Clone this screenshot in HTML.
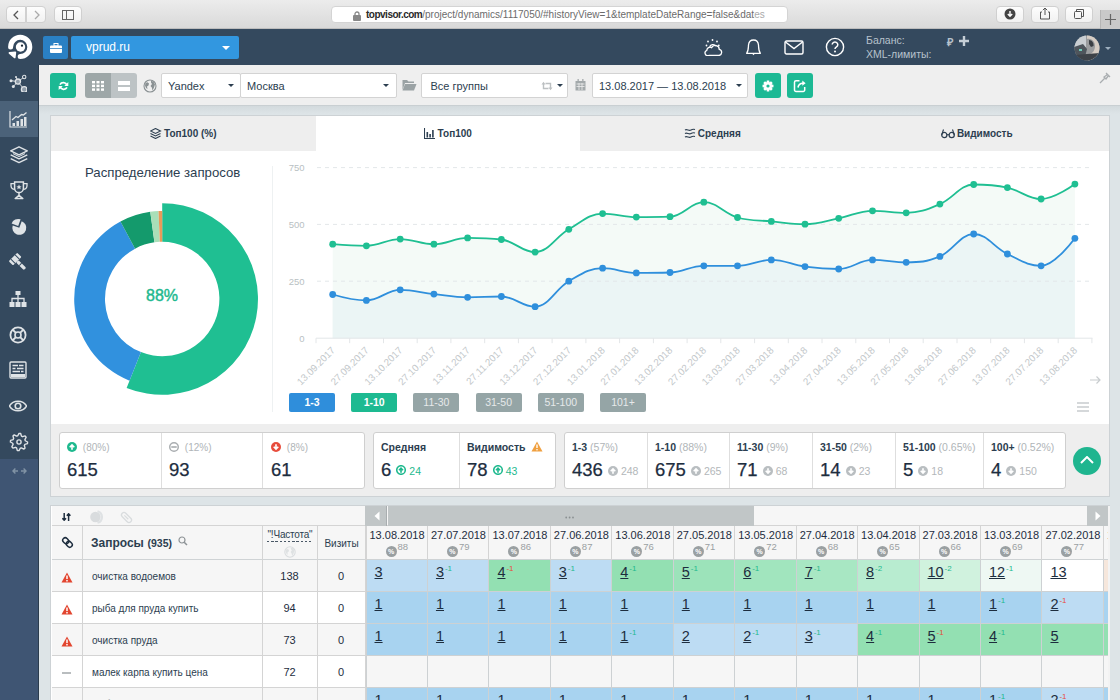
<!DOCTYPE html><html><head><meta charset="utf-8"><style>
*{box-sizing:border-box;margin:0;padding:0}
html,body{width:1120px;height:700px;overflow:hidden;background:#dde4e7;font-family:"Liberation Sans",sans-serif;color:#2c3e50}
.abs{position:absolute}
#chrome{position:absolute;left:0;top:0;width:1120px;height:29px;background:linear-gradient(#ececec,#d9d9d9);border-bottom:1px solid #bdbdbd}
.cbtn{position:absolute;top:6px;height:17px;background:linear-gradient(#fdfdfd,#f1f1f1);border:1px solid #d0d0d0;border-radius:4px}
#url{position:absolute;left:331px;top:6px;width:457px;height:17px;background:#fff;border:1px solid #d4d4d4;border-radius:4px;font-size:11px;line-height:15px;color:#555;white-space:nowrap;overflow:hidden}
#hdr{position:absolute;left:0;top:29px;width:1120px;height:36px;background:#34495e}
#side{position:absolute;left:0;top:65px;width:39px;height:635px;background:#34495e;border-right:1px solid #2b3c4d}
#tb{position:absolute;left:39px;top:65px;width:1081px;height:41px;background:#efefef;border-bottom:1px solid #c9cfd2}
#shadow{position:absolute;left:39px;top:106px;width:1081px;height:8px;background:linear-gradient(#d3dadd,#dde4e7)}
.gbtn{position:absolute;top:73px;width:26px;height:25px;background:#1cb994;border-radius:3px}
.sel{position:absolute;top:73px;height:25px;background:#fff;border:1px solid #d3d3d3;border-radius:2px;font-size:11px;line-height:24px;padding-left:6px;color:#2c3e50;white-space:nowrap}
.caret{position:absolute;top:10px;width:0;height:0;border-left:3px solid transparent;border-right:3px solid transparent;border-top:3px solid #2c3e50}
#p1{position:absolute;left:50px;top:115px;width:1060px;height:382px;background:#fff;border:1px solid #cdd2d5}
.tab{position:absolute;top:0;height:35px;background:#eeeeee;font-size:10px;font-weight:bold;line-height:36px;text-align:center;color:#2c3e50}
#stats{position:absolute;left:0;top:308px;width:1057px;height:73px;background:#eeeeee}
.sbox{position:absolute;top:8px;height:57px;background:#fff;border:1px solid #cfcfcf;border-radius:3px}
.cell{position:absolute;top:0;height:55px;border-left:1px solid #d6d6d6}
.cell:first-child{border-left:none}
.lab{position:absolute;left:9px;top:9px;font-size:11px;color:#b0b5b8;white-space:nowrap}
.lab b{color:#2c3e50}
.big{position:absolute;left:8px;top:26px;font-size:18.5px;color:#1d2d3e;white-space:nowrap}
.sm{font-size:12px;color:#a9adb0}
.leg{position:absolute;top:277px;width:46px;height:19px;border-radius:2px;color:#fff;font-size:10.5px;line-height:19px;text-align:center;background:#95a5a6}
#p2{position:absolute;left:50px;top:505px;width:1060px;height:200px;background:#fff;border:1px solid #cdd2d5}
.row{position:absolute;left:0;height:32px;width:1057px}
.c{position:absolute;top:0;height:100%;border-right:1px solid #d4d4d4;border-bottom:1px solid #d4d4d4}
.dc{position:absolute;top:0;height:100%;border-right:1px solid #cfd3d5;border-bottom:1px solid #cfd3d5}
.num{position:absolute;left:8px;top:6px;font-size:14px;color:#1d2d3e;text-decoration:underline;text-underline-offset:1px}
.num sup{font-size:8px;text-decoration:none;display:inline-block;vertical-align:top;margin-left:1px;margin-top:-2px}
.q{position:absolute;left:9px;top:9px;font-size:11.5px;color:#2c3e50;white-space:nowrap}
</style></head><body>
<div id="chrome">
<div class="cbtn" style="left:6px;width:20px;border-radius:4px 0 0 4px"></div>
<div class="cbtn" style="left:26px;width:20px;border-radius:0 4px 4px 0"></div>
<svg width="8" height="10" viewBox="0 0 8 10" style="position:absolute;left:12px;top:10px"><path d="M6 1 L2 5 L6 9" fill="none" stroke="#555" stroke-width="1.3"/></svg>
<svg width="8" height="10" viewBox="0 0 8 10" style="position:absolute;left:33px;top:10px"><path d="M2 1 L6 5 L2 9" fill="none" stroke="#aaa" stroke-width="1.3"/></svg>
<div class="cbtn" style="left:54px;width:28px"></div>
<svg width="12" height="10" viewBox="0 0 12 10" style="position:absolute;left:62px;top:10px"><rect x="0.5" y="0.5" width="11" height="9" fill="none" stroke="#666" stroke-width="1"/><line x1="4.5" y1="0.5" x2="4.5" y2="9.5" stroke="#666"/></svg>
<div id="url"><span style="position:absolute;left:21px;top:3px"><svg width="8" height="10" viewBox="0 0 8 10" style=""><rect x="0" y="4" width="8" height="6" rx="1" fill="#888"/><path d="M2 4.5 V3 a2 2 0 0 1 4 0 V4.5" fill="none" stroke="#888" stroke-width="1.3"/></svg></span><span style="position:absolute;left:34px;top:0;font-size:10px;color:#6b6b6b"><b style="color:#2a2a2a;font-weight:bold;letter-spacing:-0.5px">topvisor.com</b>/project/dynamics/1117050/#historyView=1&amp;templateDateRange=false&amp;dat<span style="color:#aaa">es</span></span></div>
<div class="cbtn" style="left:996px;width:28px"></div>
<div class="cbtn" style="left:1031px;width:28px"></div>
<div class="cbtn" style="left:1065px;width:28px"></div>
<svg width="12" height="12" viewBox="0 0 12 12" style="position:absolute;left:1004px;top:8px"><circle cx="6" cy="6" r="5.5" fill="#444"/><path d="M6 3 V8 M3.8 6 L6 8.3 L8.2 6" stroke="#fff" stroke-width="1.4" fill="none"/></svg>
<svg width="12" height="13" viewBox="0 0 12 13" style="position:absolute;left:1039px;top:7px"><path d="M3 5 H1.5 V12 H10.5 V5 H9" fill="none" stroke="#555" stroke-width="1"/><path d="M6 8 V1 M3.8 3.2 L6 1 L8.2 3.2" fill="none" stroke="#555" stroke-width="1"/></svg>
<svg width="12" height="12" viewBox="0 0 12 12" style="position:absolute;left:1073px;top:8px"><rect x="1.5" y="3.5" width="7" height="7" rx="1" fill="none" stroke="#555"/><path d="M3.5 3.5 V1.5 H10.5 V8.5 H8.5" fill="none" stroke="#555"/></svg>
<div style="position:absolute;left:1100px;top:10px;width:20px;height:19px;background:#c9c9c9;border-left:1px solid #b5b5b5"></div>
<svg width="11" height="11" viewBox="0 0 11 11" style="position:absolute;left:1105px;top:14px"><path d="M5.5 0 V11 M0 5.5 H11" stroke="#666" stroke-width="1.2"/></svg>
</div>
<div id="hdr">
<svg width="34" height="34" viewBox="0 0 34 34" style="position:absolute;left:4px;top:0px"><path d="M6.6 17.9 A9.6 9.6 0 1 1 16.2 27.5" fill="none" stroke="#fff" stroke-width="5" stroke-linecap="round"/><circle cx="16.5" cy="18" r="4.7" fill="#fff"/><circle cx="18" cy="16.7" r="1.15" fill="#1e2a36"/><path d="M5.6 23.9 L11.2 23.5 L10.6 28.3 Z" fill="#fff" stroke="#fff" stroke-width="2" stroke-linejoin="round"/></svg>
<div style="position:absolute;left:43px;top:7px;width:25px;height:23px;background:#2a80c4;border-radius:2px"></div>
<svg width="12" height="10" viewBox="0 0 12 10" style="position:absolute;left:50px;top:14px"><rect x="0" y="2.5" width="12" height="7.5" rx="1" fill="#fff"/><rect x="4" y="0.5" width="4" height="2.5" fill="none" stroke="#fff" stroke-width="1"/><line x1="0" y1="5.5" x2="12" y2="5.5" stroke="#2a80c4" stroke-width="0.8"/></svg>
<div style="position:absolute;left:71px;top:7px;width:168px;height:23px;background:#3297e0;border-radius:2px;color:#fff;font-size:12px;line-height:23px;padding-left:15px">vprud.ru</div>
<div class="caret" style="left:222px;top:17px;border-top-color:#fff;border-left-width:4px;border-right-width:4px;border-top-width:4px"></div>
<svg width="24" height="24" viewBox="0 0 24 24" style="position:absolute;left:701px;top:3px"><circle cx="11.5" cy="8" r="0.9" fill="#fff"/><circle cx="7" cy="9.5" r="0.9" fill="#fff"/><circle cx="16" cy="9.5" r="0.9" fill="#fff"/><circle cx="5.5" cy="13.5" r="0.9" fill="#fff"/><circle cx="17.8" cy="13.5" r="0.9" fill="#fff"/><path d="M8.6 15.5 A3.4 3.4 0 0 1 14.8 14.2" fill="none" stroke="#fff" stroke-width="1.3"/><path d="M7.8 23.5 H17.6 A3.1 3.1 0 0 0 18.3 17.4 A4.1 4.1 0 0 0 10.6 15.6 A3.2 3.2 0 0 0 5.8 18.4 A2.6 2.6 0 0 0 7.8 23.5 Z" fill="none" stroke="#fff" stroke-width="1.3"/></svg>
<svg width="20" height="24" viewBox="0 0 20 24" style="position:absolute;left:744px;top:3px"><path d="M2.6 21.3 C4.5 19 4.3 16 4.5 13 C4.8 9.6 6.8 8 9.5 8 C12.2 8 14.2 9.6 14.5 13 C14.7 16 14.5 19 16.4 21.3 Z" fill="none" stroke="#fff" stroke-width="1.3" stroke-linejoin="round"/><path d="M8 21.5 L9.5 23.3 L11 21.5" fill="#fff"/></svg>
<svg width="20" height="15" viewBox="0 0 20 15" style="position:absolute;left:784px;top:11px"><rect x="1" y="1" width="18" height="13" rx="1.5" fill="none" stroke="#fff" stroke-width="1.4"/><path d="M1.5 2 L10 8.5 L18.5 2" fill="none" stroke="#fff" stroke-width="1.4"/></svg>
<svg width="20" height="20" viewBox="0 0 20 20" style="position:absolute;left:825px;top:8px"><circle cx="10" cy="10" r="8.6" fill="none" stroke="#fff" stroke-width="1.4"/><path d="M7.2 7.6 a2.8 2.6 0 1 1 4.3 2.2 c-1 .6-1.5 1.1-1.5 2.3" fill="none" stroke="#fff" stroke-width="1.5"/><circle cx="10" cy="14.6" r="1" fill="#fff"/></svg>
<div style="position:absolute;left:866px;top:5px;font-size:10.5px;line-height:13.5px;color:#b7c2cc">Баланс:<br>XML-лимиты:</div>
<div style="position:absolute;left:947px;top:5px;font-size:11px;color:#b7c2cc;font-weight:bold">₽</div>
<svg width="10" height="10" viewBox="0 0 10 10" style="position:absolute;left:959px;top:7px"><path d="M5 0 V10 M0 5 H10" stroke="#c5ced6" stroke-width="2.4"/></svg>
<svg width="26" height="26" viewBox="0 0 26 26" style="position:absolute;left:1073.5px;top:5.5px"><defs><clipPath id="av"><circle cx="13" cy="13" r="12.5"/></clipPath></defs><g clip-path="url(#av)"><rect width="26" height="26" fill="#9a9c9e"/><rect x="0" y="0" width="12" height="12" fill="#c9ced2"/><path d="M0 12 L9 9 L13 14 L10 26 H0 Z" fill="#4e555c"/><path d="M13 4 C17 3 21 6 21 11 C21 15 19 18 16 19 L14 26 H26 V0 H13 Z" fill="#d6cdc4"/><path d="M15 5 C18 5 20 8 19.5 11 L17 12 L15 9 Z" fill="#3b3f44"/><path d="M0 20 L26 18 V26 H0 Z" fill="#3d4248"/><rect x="5" y="14" width="3" height="2" fill="#6fc9b8"/></g></svg>
<div class="caret" style="left:1105px;top:18px;border-top-color:#9fb0bf;border-left-width:3px;border-right-width:3px;border-top-width:3px"></div>
</div>
<div id="side">
<div style="position:absolute;left:0;top:36px;width:38px;height:36px;background:#4b6279"></div>
<div style="position:absolute;left:0;top:394px;width:38px;height:241px;background:#3f5573"></div>
<svg width="18" height="18" viewBox="0 0 18 18" style="position:absolute;left:9px;top:9px"><path d="M8.9 7.6 L15.2 3 M8.9 7.6 L15.2 15.5 M8.9 7.6 L2 6.7 M8.9 7.6 L4.3 12.5 M8.9 7.6 L7 3" stroke="#dfe3e6" stroke-width="0.9"/><circle cx="8.9" cy="7.6" r="2.6" fill="#8d9aa7" stroke="#dfe3e6" stroke-width="1.3"/><circle cx="15.2" cy="3" r="1.7" fill="#34495e" stroke="#dfe3e6" stroke-width="1.1"/><circle cx="15.2" cy="15.5" r="2.8" fill="#8d9aa7" stroke="#dfe3e6" stroke-width="1.3"/><circle cx="2" cy="6.7" r="1.5" fill="#dfe3e6"/><circle cx="4.3" cy="12.5" r="1.5" fill="#dfe3e6"/><circle cx="7" cy="3" r="1" fill="#dfe3e6"/></svg>
<svg width="18" height="18" viewBox="0 0 18 18" style="position:absolute;left:9px;top:45px"><path d="M1 1 V17 H18" fill="none" stroke="#dfe3e6" stroke-width="1.2"/><rect x="3.5" y="13" width="2.5" height="3" fill="#dfe3e6"/><rect x="7.5" y="11" width="2.5" height="5" fill="#dfe3e6"/><rect x="11.5" y="9" width="2.5" height="7" fill="#dfe3e6"/><rect x="15" y="7" width="2.5" height="9" fill="#dfe3e6"/><path d="M3 10 L7 6.5 L9 7.5 L12.5 4.5 L14.5 5 L17.5 2.5" fill="none" stroke="#dfe3e6" stroke-width="1.3"/></svg>
<svg width="20" height="20" viewBox="0 0 20 20" style="position:absolute;left:8.5px;top:80px"><path d="M10 1.8 L18.3 5.8 L10 9.8 L1.7 5.8 Z" fill="none" stroke="#dfe3e6" stroke-width="1.4" stroke-linejoin="round"/><path d="M1.7 9.8 L10 13.8 L18.3 9.8" fill="none" stroke="#dfe3e6" stroke-width="1.4" stroke-linejoin="round"/><path d="M1.7 13.6 L10 17.6 L18.3 13.6" fill="none" stroke="#dfe3e6" stroke-width="1.4" stroke-linejoin="round"/><path d="M4 8.6 L10 11.6 L16 8.6" fill="none" stroke="#dfe3e6" stroke-width="1"/></svg>
<svg width="20" height="20" viewBox="0 0 20 20" style="position:absolute;left:8.5px;top:115px"><path d="M5.6 2 H14.4 V8.2 a4.4 4.4 0 0 1 -8.8 0 Z" fill="none" stroke="#dfe3e6" stroke-width="1.5"/><path d="M5.6 3.6 H2 V5.8 a3.6 3.6 0 0 0 3.8 3.6 M14.4 3.6 H18 V5.8 a3.6 3.6 0 0 1 -3.8 3.6" fill="none" stroke="#dfe3e6" stroke-width="1.3"/><path d="M10 12.6 V15.2 M6.2 18.6 L10 15.2 L13.8 18.6 Z" fill="none" stroke="#dfe3e6" stroke-width="1.5" stroke-linejoin="round"/><path d="M10 4.6 L10.8 6.3 L12.6 6.4 L11.2 7.5 L11.7 9.2 L10 8.3 L8.3 9.2 L8.8 7.5 L7.4 6.4 L9.2 6.3 Z" fill="#dfe3e6"/></svg>
<svg width="20" height="20" viewBox="0 0 20 20" style="position:absolute;left:8.5px;top:152px"><path d="M10.3 10.8 L12.69 4.22 A7 7 0 1 1 3.72 8.41 Z" fill="#dfe3e6"/><path d="M9.2 8.9 L2.62 6.51 A7 7 0 0 1 11.59 2.32 Z" fill="#dfe3e6"/></svg>
<svg width="20" height="20" viewBox="0 0 20 20" style="position:absolute;left:8.5px;top:188px"><g transform="rotate(-45 10 10)"><rect x="4" y="1.5" width="12" height="6" rx="1" fill="#dfe3e6"/><rect x="8.3" y="7.5" width="3.4" height="11" rx="1.2" fill="#dfe3e6"/><path d="M7 1.5 V7.5 M13 1.5 V7.5 M8.3 12 H11.7" stroke="#34495e" stroke-width="1"/></g></svg>
<svg width="18" height="18" viewBox="0 0 18 18" style="position:absolute;left:9px;top:225px"><rect x="6.5" y="1" width="5" height="4" fill="#dfe3e6"/><rect x="0.5" y="12" width="5" height="5" fill="#dfe3e6"/><rect x="6.5" y="12" width="5" height="5" fill="#dfe3e6"/><rect x="12.5" y="12" width="5" height="5" fill="#dfe3e6"/><path d="M9 5 V12 M3 12 V8.5 H15 V12" fill="none" stroke="#dfe3e6" stroke-width="1.3"/></svg>
<svg width="18" height="18" viewBox="0 0 18 18" style="position:absolute;left:9px;top:261px"><circle cx="9" cy="9" r="7.6" fill="none" stroke="#dfe3e6" stroke-width="1.8"/><circle cx="9" cy="9" r="3" fill="none" stroke="#dfe3e6" stroke-width="1.6"/><path d="M3.6 3.6 L6.9 6.9 M14.4 3.6 L11.1 6.9 M3.6 14.4 L6.9 11.1 M14.4 14.4 L11.1 11.1" stroke="#dfe3e6" stroke-width="2"/></svg>
<svg width="18" height="18" viewBox="0 0 18 18" style="position:absolute;left:9px;top:296px"><rect x="1" y="1" width="16" height="16" rx="1" fill="none" stroke="#dfe3e6" stroke-width="1.4"/><path d="M3.5 4.5 H9 M10 4.5 H14.5 M3.5 7.5 H6.5 M8 7.5 H14.5 M3.5 10.5 H11 M12 10.5 H14.5" stroke="#dfe3e6" stroke-width="1.3"/><rect x="2" y="13" width="14" height="3" fill="#dfe3e6"/></svg>
<svg width="18" height="18" viewBox="0 0 18 18" style="position:absolute;left:9px;top:332px"><path d="M0.5 9 C4 2.8 14 2.8 17.5 9 C14 15.2 4 15.2 0.5 9 Z" fill="none" stroke="#dfe3e6" stroke-width="1.5"/><circle cx="9" cy="9" r="2.8" fill="none" stroke="#dfe3e6" stroke-width="1.6"/></svg>
<svg width="20" height="20" viewBox="0 0 20 20" style="position:absolute;left:8.5px;top:366.5px"><polygon points="10.00,1.40 11.68,1.57 12.45,4.09 13.56,4.68 16.08,3.92 17.15,5.22 15.91,7.55 16.28,8.75 18.60,10.00 18.43,11.68 15.91,12.45 15.32,13.56 16.08,16.08 14.78,17.15 12.45,15.91 11.25,16.28 10.00,18.60 8.32,18.43 7.55,15.91 6.44,15.32 3.92,16.08 2.85,14.78 4.09,12.45 3.72,11.25 1.40,10.00 1.57,8.32 4.09,7.55 4.68,6.44 3.92,3.92 5.22,2.85 7.55,4.09 8.75,3.72" fill="none" stroke="#dfe3e6" stroke-width="1.4" stroke-linejoin="round"/><circle cx="10" cy="10" r="2.1" fill="none" stroke="#dfe3e6" stroke-width="1.4"/></svg>
<svg width="15" height="8" viewBox="0 0 15 8" style="position:absolute;left:11.5px;top:401.5px"><path d="M1 4 H6 M3.4 1.6 L1 4 L3.4 6.4 M9 4 H14 M11.6 1.6 L14 4 L11.6 6.4" fill="none" stroke="#8193a5" stroke-width="1.4"/></svg>
</div>
<div id="tb"></div><div id="shadow"></div>
<div class="gbtn" style="left:50px"></div>
<svg width="11" height="10" viewBox="0 0 11 10" style="position:absolute;left:58px;top:81px"><path d="M9 4.2 A3.9 3.9 0 0 0 2 3.6 M2 5.8 A3.9 3.9 0 0 0 9 6.4" fill="none" stroke="#fff" stroke-width="1.8"/><path d="M10.3 1 V5 H6.3 Z M0.7 9 V5 H4.7 Z" fill="#fff"/></svg>
<div style="position:absolute;left:85px;top:73px;width:26px;height:25px;background:#9ea7a8;border-radius:3px 0 0 3px"></div>
<div style="position:absolute;left:111px;top:73px;width:26px;height:25px;background:#bdc3c5;border-radius:0 3px 3px 0"></div>
<svg width="12" height="10" viewBox="0 0 12 10" style="position:absolute;left:92px;top:81px"><rect x="0" y="0" width="3" height="2.4" fill="#fff"/><rect x="0" y="3.7" width="3" height="2.4" fill="#fff"/><rect x="0" y="7.4" width="3" height="2.4" fill="#fff"/><rect x="4.5" y="0" width="3" height="2.4" fill="#fff"/><rect x="4.5" y="3.7" width="3" height="2.4" fill="#fff"/><rect x="4.5" y="7.4" width="3" height="2.4" fill="#fff"/><rect x="9" y="0" width="3" height="2.4" fill="#fff"/><rect x="9" y="3.7" width="3" height="2.4" fill="#fff"/><rect x="9" y="7.4" width="3" height="2.4" fill="#fff"/></svg>
<svg width="12" height="10" viewBox="0 0 12 10" style="position:absolute;left:118px;top:81px"><rect x="0" y="0" width="12" height="4" fill="#fff"/><rect x="0" y="6" width="12" height="4" fill="#fff"/></svg>
<svg width="14" height="14" viewBox="0 0 14 14" style="position:absolute;left:143px;top:78.5px"><circle cx="7" cy="7" r="6" fill="none" stroke="#8a9193" stroke-width="1.1"/><path d="M2.5 4 L4.5 3.2 L6 4.5 L5.5 6.5 L4 7.5 L4.5 10 L3 9 L2 6.5 Z M8 1.8 L10.5 2.8 L12 5.5 L11 8.5 L9.5 11.5 L8.8 8.5 L7.5 7 L9 5 L8 3.5 Z" fill="#8a9193"/></svg>
<div class="sel" style="left:161px;width:80px">Yandex<div class="caret" style="left:65.5px"></div></div>
<div class="sel" style="left:240px;width:157px">Москва<div class="caret" style="left:142px"></div></div>
<svg width="15" height="12" viewBox="0 0 15 12" style="position:absolute;left:402px;top:79px"><path d="M0.5 1 H5 L6.5 2.5 H12 V4 H3 L0.5 11 Z" fill="#9aa2a4"/><path d="M3 5 H14.5 L12 11.5 H0.5 Z" fill="#9aa2a4"/></svg>
<div class="sel" style="left:421px;width:147px;padding-left:8.5px">Все группы<div class="caret" style="left:134.5px"></div></div>
<svg width="12" height="10" viewBox="0 0 12 10" style="position:absolute;left:541px;top:81px"><path d="M2.5 3 V7.5 H7.5 M9.5 7 V2.5 H4.5" fill="none" stroke="#bcc0c2" stroke-width="1.4"/><path d="M0.5 3.5 L2.5 0.8 L4.5 3.5 Z M7.5 6.5 L9.5 9.2 L11.5 6.5 Z" fill="#bcc0c2"/></svg>
<svg width="11" height="12" viewBox="0 0 11 12" style="position:absolute;left:575px;top:79px"><rect x="0.5" y="2" width="10" height="9.5" fill="#a3a9ab"/><path d="M1.5 5 H9.5 M1.5 7.5 H9.5 M4 4 V11 M7 4 V11" stroke="#efefef" stroke-width="0.8"/><rect x="2.5" y="0" width="1.3" height="3" fill="#a3a9ab"/><rect x="7.2" y="0" width="1.3" height="3" fill="#a3a9ab"/></svg>
<div class="sel" style="left:592px;width:156px">13.08.2017 — 13.08.2018<div class="caret" style="left:143px"></div></div>
<div class="gbtn" style="left:755px"></div>
<svg width="14" height="14" viewBox="0 0 14 14" style="position:absolute;left:760.6px;top:79.25px"><polygon points="5.56,3.16 5.78,1.53 8.22,1.53 8.44,3.16 8.69,3.27 10.00,2.27 11.73,4.00 10.73,5.31 10.84,5.56 12.47,5.78 12.47,8.22 10.84,8.44 10.73,8.69 11.73,10.00 10.00,11.73 8.69,10.73 8.44,10.84 8.22,12.47 5.78,12.47 5.56,10.84 5.31,10.73 4.00,11.73 2.27,10.00 3.27,8.69 3.16,8.44 1.53,8.22 1.53,5.78 3.16,5.56 3.27,5.31 2.27,4.00 4.00,2.27 5.31,3.27" fill="#fff"/><circle cx="7" cy="7" r="1.6" fill="#1cb994"/></svg>
<div class="gbtn" style="left:787px"></div>
<svg width="14" height="14" viewBox="0 0 14 14" style="position:absolute;left:793px;top:79px"><path d="M6.5 1.8 H3 a1.5 1.5 0 0 0 -1.5 1.5 V11 a1.5 1.5 0 0 0 1.5 1.5 H10.2 a1.5 1.5 0 0 0 1.5 -1.5 V8" fill="none" stroke="#fff" stroke-width="1.5"/><path d="M5 8.5 C5.5 5.5 7.5 4.2 10 4.2" fill="none" stroke="#fff" stroke-width="1.6"/><path d="M9.3 1.6 L12.6 4.2 L9.3 6.8 Z" fill="#fff"/></svg>
<svg width="12" height="12" viewBox="0 0 12 12" style="position:absolute;left:1099px;top:72px"><path d="M7 1 L11 5 M8.5 2.5 L5 5 L7 7 L9.5 3.5 M5.5 6.5 L1 11" fill="none" stroke="#a9adb0" stroke-width="1.3"/></svg>
<div id="p1">
<div class="tab" style="left:0.00px;width:264.50px;background:#eeeeee"><span style="display:inline-block;vertical-align:middle;margin-right:2px;position:relative;top:1.5px"><svg width="12" height="11" viewBox="0 0 12 11" style=""><path d="M5.5 0.5 L10.5 3 L5.5 5.5 L0.5 3 Z" fill="none" stroke="#2c3e50" stroke-width="1.1"/><path d="M0.5 5.5 L5.5 8 L10.5 5.5 M0.5 8 L5.5 10.5 L10.5 8" fill="none" stroke="#2c3e50" stroke-width="1.1"/></svg></span>Топ100 (%)</div>
<div class="tab" style="left:264.50px;width:264.50px;background:#fff"><span style="display:inline-block;vertical-align:middle;margin-right:2px;position:relative;top:1.5px"><svg width="12" height="11" viewBox="0 0 12 11" style=""><path d="M0.5 0 V10.5 H11" fill="none" stroke="#2c3e50" stroke-width="1.1"/><rect x="2.5" y="4" width="1.6" height="5.5" fill="#2c3e50"/><rect x="5.3" y="6" width="1.6" height="3.5" fill="#2c3e50"/><rect x="8.1" y="2" width="1.6" height="7.5" fill="#2c3e50"/></svg></span>Топ100</div>
<div class="tab" style="left:529.00px;width:264.50px;background:#eeeeee"><span style="display:inline-block;vertical-align:middle;margin-right:2px;position:relative;top:1.5px"><svg width="12" height="11" viewBox="0 0 12 11" style=""><path d="M1 2 C3 0.5 5 3.5 7 2 C8.5 1 9.5 1 11 1.5 M1 5.5 C3 4 5 7 7 5.5 C8.5 4.5 9.5 4.5 11 5 M1 9 C3 7.5 5 10.5 7 9 C8.5 8 9.5 8 11 8.5" fill="none" stroke="#2c3e50" stroke-width="1.1"/></svg></span>Средняя</div>
<div class="tab" style="left:793.50px;width:264.50px;background:#eeeeee"><span style="display:inline-block;vertical-align:middle;margin-right:2px;position:relative;top:1.5px"><svg width="14" height="11" viewBox="0 0 14 11" style=""><circle cx="3.3" cy="7" r="2.6" fill="none" stroke="#2c3e50" stroke-width="1.2"/><circle cx="10.7" cy="7" r="2.6" fill="none" stroke="#2c3e50" stroke-width="1.2"/><path d="M5.9 7 Q7 6 8.1 7 M0.7 7 L2.5 1.5 M13.3 7 L11.5 1.5" fill="none" stroke="#2c3e50" stroke-width="1.1"/></svg></span>Видимость</div>
<div style="position:absolute;left:34px;top:49px;font-size:13.2px;color:#2c3e50;white-space:nowrap">Распределение запросов</div>
<div style="position:absolute;left:221px;top:50px;width:1px;height:246px;background:#eef1f2"></div>
</div>
<svg width="1120" height="700" viewBox="0 0 1120 700" style="position:absolute;left:0;top:0"><path d="M162.20 203.20 A95.8 95.8 0 1 1 126.62 387.95 L140.96 352.11 A57.2 57.2 0 1 0 162.20 241.80 Z" fill="#1fbf92"/><path d="M129.52 380.71 A88 88 0 0 1 120.48 221.52 L135.08 248.64 A57.2 57.2 0 0 0 140.96 352.11 Z" fill="#3191de"/><path d="M120.48 221.52 A88 88 0 0 1 150.26 211.81 L154.44 242.33 A57.2 57.2 0 0 0 135.08 248.64 Z" fill="#149a6c"/><path d="M150.26 211.81 A88 88 0 0 1 158.51 211.08 L159.80 241.85 A57.2 57.2 0 0 0 154.44 242.33 Z" fill="#a9dfb8"/><path d="M158.51 211.08 A88 88 0 0 1 162.18 211.00 L162.19 241.80 A57.2 57.2 0 0 0 159.80 241.85 Z" fill="#e89a5a"/></svg>
<div style="position:absolute;left:145px;top:286.5px;width:34px;text-align:center;font-size:16px;color:#1eb98e;-webkit-text-stroke:0.45px #1eb98e">88%</div>
<svg width="1120" height="700" viewBox="0 0 1120 700" style="position:absolute;left:0;top:0"><path d="M332.7 244.2 C332.7 244.2 352.9 245.8 366.4 245.8 C379.9 245.8 386.7 239.1 400.2 239.1 C413.7 239.1 420.4 244.2 433.9 244.2 C447.4 244.2 454.1 237.9 467.6 237.9 C481.1 237.9 487.9 237.9 501.4 239.5 C514.9 241.1 521.6 252.1 535.1 252.1 C548.6 252.1 555.4 237.0 568.8 229.3 C582.3 221.6 589.1 213.6 602.6 213.6 C616.1 213.6 622.8 217.1 636.3 217.1 C649.8 217.1 656.6 217.1 670.0 216.7 C683.5 216.3 690.3 202.2 703.8 202.2 C717.3 202.2 724.0 213.7 737.5 217.5 C751.0 221.3 757.8 220.1 771.3 221.4 C784.7 222.7 791.5 224.2 805.0 224.2 C818.5 224.2 825.2 221.0 838.7 218.3 C852.2 215.6 859.0 210.8 872.5 210.8 C886.0 210.8 892.7 212.8 906.2 212.8 C919.7 212.8 926.4 209.8 939.9 204.1 C953.4 198.4 960.2 184.5 973.7 184.5 C987.2 184.5 993.9 184.7 1007.4 187.6 C1020.9 190.5 1027.6 199.0 1041.1 199.0 C1054.6 199.0 1074.9 184.1 1074.9 184.1 L1074.9 338.2 L332.7 338.2 Z" fill="#f4faf7"/><path d="M332.7 294.5 C332.7 294.5 352.9 300.4 366.4 300.4 C379.9 300.4 386.7 289.8 400.2 289.8 C413.7 289.8 420.4 292.6 433.9 294.1 C447.4 295.6 454.1 297.3 467.6 297.3 C481.1 297.3 487.9 296.5 501.4 296.5 C514.9 296.5 521.6 306.7 535.1 306.7 C548.6 306.7 555.4 288.9 568.8 281.2 C582.3 273.5 589.1 268.2 602.6 268.2 C616.1 268.2 622.8 272.9 636.3 272.9 C649.8 272.9 656.6 272.9 670.0 272.5 C683.5 272.1 690.3 265.8 703.8 265.8 C717.3 265.8 724.0 265.8 737.5 265.8 C751.0 265.8 757.8 259.9 771.3 259.9 C784.7 259.9 791.5 264.8 805.0 266.6 C818.5 268.4 825.2 269.0 838.7 269.0 C852.2 269.0 859.0 259.9 872.5 259.9 C886.0 259.9 892.7 262.3 906.2 262.3 C919.7 262.3 926.4 262.1 939.9 256.4 C953.4 250.7 960.2 234.0 973.7 234.0 C987.2 234.0 993.9 247.6 1007.4 254.0 C1020.9 260.4 1027.6 265.8 1041.1 265.8 C1054.6 265.8 1074.9 238.3 1074.9 238.3 L1074.9 338.2 L332.7 338.2 Z" fill="#ebf5f5"/><line x1="317" y1="167.6" x2="1092" y2="167.6" stroke="#e3e7e9" stroke-width="1" stroke-dasharray="4,4"/><line x1="317" y1="224.4" x2="1092" y2="224.4" stroke="#e3e7e9" stroke-width="1" stroke-dasharray="4,4"/><line x1="317" y1="281.2" x2="1092" y2="281.2" stroke="#e3e7e9" stroke-width="1" stroke-dasharray="4,4"/><text x="304.5" y="171.1" text-anchor="end" font-size="9.5" fill="#b9bfc3" font-family="Liberation Sans">750</text><text x="304.5" y="227.9" text-anchor="end" font-size="9.5" fill="#b9bfc3" font-family="Liberation Sans">500</text><text x="304.5" y="284.7" text-anchor="end" font-size="9.5" fill="#b9bfc3" font-family="Liberation Sans">250</text><text x="304.5" y="341.7" text-anchor="end" font-size="9.5" fill="#b9bfc3" font-family="Liberation Sans">0</text><line x1="316" y1="338.2" x2="1092.5" y2="338.2" stroke="#e3e6e8" stroke-width="1"/><line x1="316.0" y1="338.2" x2="316.0" y2="343.2" stroke="#e3e6e8"/><line x1="349.7" y1="338.2" x2="349.7" y2="343.2" stroke="#e3e6e8"/><line x1="383.5" y1="338.2" x2="383.5" y2="343.2" stroke="#e3e6e8"/><line x1="417.2" y1="338.2" x2="417.2" y2="343.2" stroke="#e3e6e8"/><line x1="450.9" y1="338.2" x2="450.9" y2="343.2" stroke="#e3e6e8"/><line x1="484.7" y1="338.2" x2="484.7" y2="343.2" stroke="#e3e6e8"/><line x1="518.4" y1="338.2" x2="518.4" y2="343.2" stroke="#e3e6e8"/><line x1="552.1" y1="338.2" x2="552.1" y2="343.2" stroke="#e3e6e8"/><line x1="585.9" y1="338.2" x2="585.9" y2="343.2" stroke="#e3e6e8"/><line x1="619.6" y1="338.2" x2="619.6" y2="343.2" stroke="#e3e6e8"/><line x1="653.4" y1="338.2" x2="653.4" y2="343.2" stroke="#e3e6e8"/><line x1="687.1" y1="338.2" x2="687.1" y2="343.2" stroke="#e3e6e8"/><line x1="720.8" y1="338.2" x2="720.8" y2="343.2" stroke="#e3e6e8"/><line x1="754.6" y1="338.2" x2="754.6" y2="343.2" stroke="#e3e6e8"/><line x1="788.3" y1="338.2" x2="788.3" y2="343.2" stroke="#e3e6e8"/><line x1="822.0" y1="338.2" x2="822.0" y2="343.2" stroke="#e3e6e8"/><line x1="855.8" y1="338.2" x2="855.8" y2="343.2" stroke="#e3e6e8"/><line x1="889.5" y1="338.2" x2="889.5" y2="343.2" stroke="#e3e6e8"/><line x1="923.2" y1="338.2" x2="923.2" y2="343.2" stroke="#e3e6e8"/><line x1="957.0" y1="338.2" x2="957.0" y2="343.2" stroke="#e3e6e8"/><line x1="990.7" y1="338.2" x2="990.7" y2="343.2" stroke="#e3e6e8"/><line x1="1024.4" y1="338.2" x2="1024.4" y2="343.2" stroke="#e3e6e8"/><line x1="1058.2" y1="338.2" x2="1058.2" y2="343.2" stroke="#e3e6e8"/><line x1="1091.9" y1="338.2" x2="1091.9" y2="343.2" stroke="#e3e6e8"/><path d="M332.7 244.2 C332.7 244.2 352.9 245.8 366.4 245.8 C379.9 245.8 386.7 239.1 400.2 239.1 C413.7 239.1 420.4 244.2 433.9 244.2 C447.4 244.2 454.1 237.9 467.6 237.9 C481.1 237.9 487.9 237.9 501.4 239.5 C514.9 241.1 521.6 252.1 535.1 252.1 C548.6 252.1 555.4 237.0 568.8 229.3 C582.3 221.6 589.1 213.6 602.6 213.6 C616.1 213.6 622.8 217.1 636.3 217.1 C649.8 217.1 656.6 217.1 670.0 216.7 C683.5 216.3 690.3 202.2 703.8 202.2 C717.3 202.2 724.0 213.7 737.5 217.5 C751.0 221.3 757.8 220.1 771.3 221.4 C784.7 222.7 791.5 224.2 805.0 224.2 C818.5 224.2 825.2 221.0 838.7 218.3 C852.2 215.6 859.0 210.8 872.5 210.8 C886.0 210.8 892.7 212.8 906.2 212.8 C919.7 212.8 926.4 209.8 939.9 204.1 C953.4 198.4 960.2 184.5 973.7 184.5 C987.2 184.5 993.9 184.7 1007.4 187.6 C1020.9 190.5 1027.6 199.0 1041.1 199.0 C1054.6 199.0 1074.9 184.1 1074.9 184.1" fill="none" stroke="#1fbf92" stroke-width="1.8"/><path d="M332.7 294.5 C332.7 294.5 352.9 300.4 366.4 300.4 C379.9 300.4 386.7 289.8 400.2 289.8 C413.7 289.8 420.4 292.6 433.9 294.1 C447.4 295.6 454.1 297.3 467.6 297.3 C481.1 297.3 487.9 296.5 501.4 296.5 C514.9 296.5 521.6 306.7 535.1 306.7 C548.6 306.7 555.4 288.9 568.8 281.2 C582.3 273.5 589.1 268.2 602.6 268.2 C616.1 268.2 622.8 272.9 636.3 272.9 C649.8 272.9 656.6 272.9 670.0 272.5 C683.5 272.1 690.3 265.8 703.8 265.8 C717.3 265.8 724.0 265.8 737.5 265.8 C751.0 265.8 757.8 259.9 771.3 259.9 C784.7 259.9 791.5 264.8 805.0 266.6 C818.5 268.4 825.2 269.0 838.7 269.0 C852.2 269.0 859.0 259.9 872.5 259.9 C886.0 259.9 892.7 262.3 906.2 262.3 C919.7 262.3 926.4 262.1 939.9 256.4 C953.4 250.7 960.2 234.0 973.7 234.0 C987.2 234.0 993.9 247.6 1007.4 254.0 C1020.9 260.4 1027.6 265.8 1041.1 265.8 C1054.6 265.8 1074.9 238.3 1074.9 238.3" fill="none" stroke="#2f8fdc" stroke-width="1.8"/><circle cx="332.7" cy="244.2" r="3.4" fill="#1fbf92"/><circle cx="366.4" cy="245.8" r="3.4" fill="#1fbf92"/><circle cx="400.2" cy="239.1" r="3.4" fill="#1fbf92"/><circle cx="433.9" cy="244.2" r="3.4" fill="#1fbf92"/><circle cx="467.6" cy="237.9" r="3.4" fill="#1fbf92"/><circle cx="501.4" cy="239.5" r="3.4" fill="#1fbf92"/><circle cx="535.1" cy="252.1" r="3.4" fill="#1fbf92"/><circle cx="568.8" cy="229.3" r="3.4" fill="#1fbf92"/><circle cx="602.6" cy="213.6" r="3.4" fill="#1fbf92"/><circle cx="636.3" cy="217.1" r="3.4" fill="#1fbf92"/><circle cx="670.0" cy="216.7" r="3.4" fill="#1fbf92"/><circle cx="703.8" cy="202.2" r="3.4" fill="#1fbf92"/><circle cx="737.5" cy="217.5" r="3.4" fill="#1fbf92"/><circle cx="771.3" cy="221.4" r="3.4" fill="#1fbf92"/><circle cx="805.0" cy="224.2" r="3.4" fill="#1fbf92"/><circle cx="838.7" cy="218.3" r="3.4" fill="#1fbf92"/><circle cx="872.5" cy="210.8" r="3.4" fill="#1fbf92"/><circle cx="906.2" cy="212.8" r="3.4" fill="#1fbf92"/><circle cx="939.9" cy="204.1" r="3.4" fill="#1fbf92"/><circle cx="973.7" cy="184.5" r="3.4" fill="#1fbf92"/><circle cx="1007.4" cy="187.6" r="3.4" fill="#1fbf92"/><circle cx="1041.1" cy="199.0" r="3.4" fill="#1fbf92"/><circle cx="1074.9" cy="184.1" r="3.4" fill="#1fbf92"/><circle cx="332.7" cy="294.5" r="3.4" fill="#2f8fdc"/><circle cx="366.4" cy="300.4" r="3.4" fill="#2f8fdc"/><circle cx="400.2" cy="289.8" r="3.4" fill="#2f8fdc"/><circle cx="433.9" cy="294.1" r="3.4" fill="#2f8fdc"/><circle cx="467.6" cy="297.3" r="3.4" fill="#2f8fdc"/><circle cx="501.4" cy="296.5" r="3.4" fill="#2f8fdc"/><circle cx="535.1" cy="306.7" r="3.4" fill="#2f8fdc"/><circle cx="568.8" cy="281.2" r="3.4" fill="#2f8fdc"/><circle cx="602.6" cy="268.2" r="3.4" fill="#2f8fdc"/><circle cx="636.3" cy="272.9" r="3.4" fill="#2f8fdc"/><circle cx="670.0" cy="272.5" r="3.4" fill="#2f8fdc"/><circle cx="703.8" cy="265.8" r="3.4" fill="#2f8fdc"/><circle cx="737.5" cy="265.8" r="3.4" fill="#2f8fdc"/><circle cx="771.3" cy="259.9" r="3.4" fill="#2f8fdc"/><circle cx="805.0" cy="266.6" r="3.4" fill="#2f8fdc"/><circle cx="838.7" cy="269.0" r="3.4" fill="#2f8fdc"/><circle cx="872.5" cy="259.9" r="3.4" fill="#2f8fdc"/><circle cx="906.2" cy="262.3" r="3.4" fill="#2f8fdc"/><circle cx="939.9" cy="256.4" r="3.4" fill="#2f8fdc"/><circle cx="973.7" cy="234.0" r="3.4" fill="#2f8fdc"/><circle cx="1007.4" cy="254.0" r="3.4" fill="#2f8fdc"/><circle cx="1041.1" cy="265.8" r="3.4" fill="#2f8fdc"/><circle cx="1074.9" cy="238.3" r="3.4" fill="#2f8fdc"/><text x="335.7" y="351" transform="rotate(-45 335.7 351)" text-anchor="end" font-size="9.8" fill="#c2c7ca" font-family="Liberation Sans">13.09.2017</text><text x="369.4" y="351" transform="rotate(-45 369.4 351)" text-anchor="end" font-size="9.8" fill="#c2c7ca" font-family="Liberation Sans">27.09.2017</text><text x="403.2" y="351" transform="rotate(-45 403.2 351)" text-anchor="end" font-size="9.8" fill="#c2c7ca" font-family="Liberation Sans">13.10.2017</text><text x="436.9" y="351" transform="rotate(-45 436.9 351)" text-anchor="end" font-size="9.8" fill="#c2c7ca" font-family="Liberation Sans">27.10.2017</text><text x="470.6" y="351" transform="rotate(-45 470.6 351)" text-anchor="end" font-size="9.8" fill="#c2c7ca" font-family="Liberation Sans">13.11.2017</text><text x="504.4" y="351" transform="rotate(-45 504.4 351)" text-anchor="end" font-size="9.8" fill="#c2c7ca" font-family="Liberation Sans">27.11.2017</text><text x="538.1" y="351" transform="rotate(-45 538.1 351)" text-anchor="end" font-size="9.8" fill="#c2c7ca" font-family="Liberation Sans">13.12.2017</text><text x="571.8" y="351" transform="rotate(-45 571.8 351)" text-anchor="end" font-size="9.8" fill="#c2c7ca" font-family="Liberation Sans">27.12.2017</text><text x="605.6" y="351" transform="rotate(-45 605.6 351)" text-anchor="end" font-size="9.8" fill="#c2c7ca" font-family="Liberation Sans">13.01.2018</text><text x="639.3" y="351" transform="rotate(-45 639.3 351)" text-anchor="end" font-size="9.8" fill="#c2c7ca" font-family="Liberation Sans">27.01.2018</text><text x="673.0" y="351" transform="rotate(-45 673.0 351)" text-anchor="end" font-size="9.8" fill="#c2c7ca" font-family="Liberation Sans">13.02.2018</text><text x="706.8" y="351" transform="rotate(-45 706.8 351)" text-anchor="end" font-size="9.8" fill="#c2c7ca" font-family="Liberation Sans">27.02.2018</text><text x="740.5" y="351" transform="rotate(-45 740.5 351)" text-anchor="end" font-size="9.8" fill="#c2c7ca" font-family="Liberation Sans">13.03.2018</text><text x="774.3" y="351" transform="rotate(-45 774.3 351)" text-anchor="end" font-size="9.8" fill="#c2c7ca" font-family="Liberation Sans">27.03.2018</text><text x="808.0" y="351" transform="rotate(-45 808.0 351)" text-anchor="end" font-size="9.8" fill="#c2c7ca" font-family="Liberation Sans">13.04.2018</text><text x="841.7" y="351" transform="rotate(-45 841.7 351)" text-anchor="end" font-size="9.8" fill="#c2c7ca" font-family="Liberation Sans">27.04.2018</text><text x="875.5" y="351" transform="rotate(-45 875.5 351)" text-anchor="end" font-size="9.8" fill="#c2c7ca" font-family="Liberation Sans">13.05.2018</text><text x="909.2" y="351" transform="rotate(-45 909.2 351)" text-anchor="end" font-size="9.8" fill="#c2c7ca" font-family="Liberation Sans">27.05.2018</text><text x="942.9" y="351" transform="rotate(-45 942.9 351)" text-anchor="end" font-size="9.8" fill="#c2c7ca" font-family="Liberation Sans">13.06.2018</text><text x="976.7" y="351" transform="rotate(-45 976.7 351)" text-anchor="end" font-size="9.8" fill="#c2c7ca" font-family="Liberation Sans">27.06.2018</text><text x="1010.4" y="351" transform="rotate(-45 1010.4 351)" text-anchor="end" font-size="9.8" fill="#c2c7ca" font-family="Liberation Sans">13.07.2018</text><text x="1044.1" y="351" transform="rotate(-45 1044.1 351)" text-anchor="end" font-size="9.8" fill="#c2c7ca" font-family="Liberation Sans">27.07.2018</text><text x="1077.9" y="351" transform="rotate(-45 1077.9 351)" text-anchor="end" font-size="9.8" fill="#c2c7ca" font-family="Liberation Sans">13.08.2018</text><path d="M1090 380 H1100 M1096.5 376.5 L1100 380 L1096.5 383.5" fill="none" stroke="#c8ccce" stroke-width="1.2"/><path d="M1077 403 H1089 M1077 407 H1089 M1077 411 H1089" stroke="#c8ccce" stroke-width="1.6"/></svg>
<div class="leg" style="left:289.0px;top:393px;background:#2f8edb;font-weight:bold">1-3</div>
<div class="leg" style="left:351.2px;top:393px;background:#1dba91;font-weight:bold">1-10</div>
<div class="leg" style="left:413.4px;top:393px;color:#e6e9ea">11-30</div>
<div class="leg" style="left:475.6px;top:393px;color:#e6e9ea">31-50</div>
<div class="leg" style="left:537.8px;top:393px;color:#e6e9ea">51-100</div>
<div class="leg" style="left:600.0px;top:393px;color:#e6e9ea">101+</div>
<div style="position:absolute;left:50px;top:424px;width:1060px;height:73px;background:#eeeeee;border:1px solid #cdd2d5;border-top:none"></div>
<div class="sbox" style="left:59px;top:432px;width:306px"></div>
<div class="sbox" style="left:373px;top:432px;width:183px"></div>
<div class="sbox" style="left:564px;top:432px;width:502px"></div>
<div style="position:absolute;left:161px;top:433px;width:1px;height:55px;background:#dedede"></div>
<div style="position:absolute;left:262px;top:433px;width:1px;height:55px;background:#dedede"></div>
<div style="position:absolute;left:459px;top:433px;width:1px;height:55px;background:#dedede"></div>
<div style="position:absolute;left:647px;top:433px;width:1px;height:55px;background:#dedede"></div>
<div style="position:absolute;left:729px;top:433px;width:1px;height:55px;background:#dedede"></div>
<div style="position:absolute;left:812px;top:433px;width:1px;height:55px;background:#dedede"></div>
<div style="position:absolute;left:895px;top:433px;width:1px;height:55px;background:#dedede"></div>
<div style="position:absolute;left:983px;top:433px;width:1px;height:55px;background:#dedede"></div>
<div style="position:absolute;left:67px;top:441px;font-size:10.5px;color:#b0b5b8;white-space:nowrap;line-height:13px"><svg width="10" height="10" viewBox="0 0 11 11" style="vertical-align:-1px"><circle cx="5.5" cy="5.5" r="5.5" fill="#1eb98e"/><path d="M5.5 8.5 V3.5 M3 5.8 L5.5 3.2 L8 5.8" fill="none" stroke="#fff" stroke-width="1.8"/></svg> &nbsp;<span style="font-size:10px">(80%)</span></div>
<div style="position:absolute;left:67px;top:458.5px;font-size:18.5px;-webkit-text-stroke:0.25px #1d2d3e;color:#1d2d3e;white-space:nowrap;line-height:22px">615</div>
<div style="position:absolute;left:169px;top:441px;font-size:10.5px;color:#b0b5b8;white-space:nowrap;line-height:13px"><svg width="10" height="10" viewBox="0 0 11 11" style="vertical-align:-1px"><circle cx="5.5" cy="5.5" r="4.7" fill="none" stroke="#a9adb0" stroke-width="1.6"/><path d="M2.5 5.5 H8.5" stroke="#a9adb0" stroke-width="1.8"/></svg> &nbsp;<span style="font-size:10px">(12%)</span></div>
<div style="position:absolute;left:169px;top:458.5px;font-size:18.5px;-webkit-text-stroke:0.25px #1d2d3e;color:#1d2d3e;white-space:nowrap;line-height:22px">93</div>
<div style="position:absolute;left:271px;top:441px;font-size:10.5px;color:#b0b5b8;white-space:nowrap;line-height:13px"><svg width="10" height="10" viewBox="0 0 11 11" style="vertical-align:-1px"><circle cx="5.5" cy="5.5" r="5.5" fill="#e74c3c"/><path d="M5.5 2.5 V7.5 M3 5.2 L5.5 7.8 L8 5.2" fill="none" stroke="#fff" stroke-width="1.8"/></svg> &nbsp;<span style="font-size:10px">(8%)</span></div>
<div style="position:absolute;left:271px;top:458.5px;font-size:18.5px;-webkit-text-stroke:0.25px #1d2d3e;color:#1d2d3e;white-space:nowrap;line-height:22px">61</div>
<div style="position:absolute;left:381px;top:441px;font-size:10.5px;color:#b0b5b8;white-space:nowrap;line-height:13px"><b style="color:#2c3e50">Средняя</b></div>
<div style="position:absolute;left:381px;top:458.5px;font-size:18.5px;-webkit-text-stroke:0.25px #1d2d3e;color:#1d2d3e;white-space:nowrap;line-height:22px">6 <span style="font-size:10.5px;-webkit-text-stroke:0;color:#1eb98e;position:relative;top:-1px"><svg width="10" height="10" viewBox="0 0 11 11" style="vertical-align:0px"><circle cx="5.5" cy="5.5" r="4.7" fill="none" stroke="#1eb98e" stroke-width="1.7"/><path d="M5.5 8.6 V3.6 M3.3 5.8 L5.5 3.5 L7.7 5.8" fill="none" stroke="#1eb98e" stroke-width="1.8"/></svg> 24</span></div>
<div style="position:absolute;left:467px;top:441px;font-size:10.5px;color:#b0b5b8;white-space:nowrap;line-height:13px"><b style="color:#2c3e50">Видимость</b> &nbsp;<svg width="12" height="11" viewBox="0 0 12 11" style="vertical-align:-1px"><path d="M6 0.5 L11.5 10.5 H0.5 Z" fill="#f0a040"/><path d="M6 3.5 V7" stroke="#fff" stroke-width="1.4"/><circle cx="6" cy="8.7" r="0.8" fill="#fff"/></svg></div>
<div style="position:absolute;left:467px;top:458.5px;font-size:18.5px;-webkit-text-stroke:0.25px #1d2d3e;color:#1d2d3e;white-space:nowrap;line-height:22px">78 <span style="font-size:10.5px;-webkit-text-stroke:0;color:#1eb98e;position:relative;top:-1px"><svg width="10" height="10" viewBox="0 0 11 11" style="vertical-align:0px"><circle cx="5.5" cy="5.5" r="4.7" fill="none" stroke="#1eb98e" stroke-width="1.7"/><path d="M5.5 8.6 V3.6 M3.3 5.8 L5.5 3.5 L7.7 5.8" fill="none" stroke="#1eb98e" stroke-width="1.8"/></svg> 43</span></div>
<div style="position:absolute;left:572px;top:441px;font-size:10.5px;color:#b0b5b8;white-space:nowrap;line-height:13px"><b style="color:#2c3e50">1-3</b> (57%)</div>
<div style="position:absolute;left:572px;top:458.5px;font-size:18.5px;-webkit-text-stroke:0.25px #1d2d3e;color:#1d2d3e;white-space:nowrap;line-height:22px">436 <span style="font-size:10.5px;-webkit-text-stroke:0;color:#b3b7ba;position:relative;top:-1px"><svg width="10" height="10" viewBox="0 0 11 11" style="vertical-align:-1px"><circle cx="5.5" cy="5.5" r="5.5" fill="#b9bec1"/><path d="M5.5 8.5 V3.5 M3 5.8 L5.5 3.2 L8 5.8" fill="none" stroke="#fff" stroke-width="1.8"/></svg> 248</span></div>
<div style="position:absolute;left:655px;top:441px;font-size:10.5px;color:#b0b5b8;white-space:nowrap;line-height:13px"><b style="color:#2c3e50">1-10</b> (88%)</div>
<div style="position:absolute;left:655px;top:458.5px;font-size:18.5px;-webkit-text-stroke:0.25px #1d2d3e;color:#1d2d3e;white-space:nowrap;line-height:22px">675 <span style="font-size:10.5px;-webkit-text-stroke:0;color:#b3b7ba;position:relative;top:-1px"><svg width="10" height="10" viewBox="0 0 11 11" style="vertical-align:-1px"><circle cx="5.5" cy="5.5" r="5.5" fill="#b9bec1"/><path d="M5.5 8.5 V3.5 M3 5.8 L5.5 3.2 L8 5.8" fill="none" stroke="#fff" stroke-width="1.8"/></svg> 265</span></div>
<div style="position:absolute;left:737px;top:441px;font-size:10.5px;color:#b0b5b8;white-space:nowrap;line-height:13px"><b style="color:#2c3e50">11-30</b> (9%)</div>
<div style="position:absolute;left:737px;top:458.5px;font-size:18.5px;-webkit-text-stroke:0.25px #1d2d3e;color:#1d2d3e;white-space:nowrap;line-height:22px">71 <span style="font-size:10.5px;-webkit-text-stroke:0;color:#b3b7ba;position:relative;top:-1px"><svg width="10" height="10" viewBox="0 0 11 11" style="vertical-align:-1px"><circle cx="5.5" cy="5.5" r="5.5" fill="#b9bec1"/><path d="M5.5 2.5 V7.5 M3 5.2 L5.5 7.8 L8 5.2" fill="none" stroke="#fff" stroke-width="1.8"/></svg> 68</span></div>
<div style="position:absolute;left:820px;top:441px;font-size:10.5px;color:#b0b5b8;white-space:nowrap;line-height:13px"><b style="color:#2c3e50">31-50</b> (2%)</div>
<div style="position:absolute;left:820px;top:458.5px;font-size:18.5px;-webkit-text-stroke:0.25px #1d2d3e;color:#1d2d3e;white-space:nowrap;line-height:22px">14 <span style="font-size:10.5px;-webkit-text-stroke:0;color:#b3b7ba;position:relative;top:-1px"><svg width="10" height="10" viewBox="0 0 11 11" style="vertical-align:-1px"><circle cx="5.5" cy="5.5" r="5.5" fill="#b9bec1"/><path d="M5.5 2.5 V7.5 M3 5.2 L5.5 7.8 L8 5.2" fill="none" stroke="#fff" stroke-width="1.8"/></svg> 23</span></div>
<div style="position:absolute;left:903px;top:441px;font-size:10.5px;color:#b0b5b8;white-space:nowrap;line-height:13px"><b style="color:#2c3e50">51-100</b> (0.65%)</div>
<div style="position:absolute;left:903px;top:458.5px;font-size:18.5px;-webkit-text-stroke:0.25px #1d2d3e;color:#1d2d3e;white-space:nowrap;line-height:22px">5 <span style="font-size:10.5px;-webkit-text-stroke:0;color:#b3b7ba;position:relative;top:-1px"><svg width="10" height="10" viewBox="0 0 11 11" style="vertical-align:-1px"><circle cx="5.5" cy="5.5" r="5.5" fill="#b9bec1"/><path d="M5.5 2.5 V7.5 M3 5.2 L5.5 7.8 L8 5.2" fill="none" stroke="#fff" stroke-width="1.8"/></svg> 18</span></div>
<div style="position:absolute;left:991px;top:441px;font-size:10.5px;color:#b0b5b8;white-space:nowrap;line-height:13px"><b style="color:#2c3e50">100+</b> (0.52%)</div>
<div style="position:absolute;left:991px;top:458.5px;font-size:18.5px;-webkit-text-stroke:0.25px #1d2d3e;color:#1d2d3e;white-space:nowrap;line-height:22px">4 <span style="font-size:10.5px;-webkit-text-stroke:0;color:#b3b7ba;position:relative;top:-1px"><svg width="10" height="10" viewBox="0 0 11 11" style="vertical-align:-1px"><circle cx="5.5" cy="5.5" r="5.5" fill="#b9bec1"/><path d="M5.5 2.5 V7.5 M3 5.2 L5.5 7.8 L8 5.2" fill="none" stroke="#fff" stroke-width="1.8"/></svg> 150</span></div>
<div style="position:absolute;left:1073px;top:447px;width:28px;height:28px;border-radius:50%;background:#1fb58f"></div>
<svg width="14" height="8" viewBox="0 0 14 8" style="position:absolute;left:1080px;top:456px"><path d="M1 7 L7 1 L13 7" fill="none" stroke="#fff" stroke-width="2"/></svg>
<div id="p2"></div>
<div style="position:absolute;left:52px;top:506px;width:313px;height:20px;background:#f6f6f6;border-bottom:1px solid #d4d4d4"></div>
<svg width="9" height="8" viewBox="0 0 9 8" style="position:absolute;left:61.5px;top:513px"><path d="M2.2 0 V7 M0.4 5.2 L2.2 7.2 L4 5.2 M6.6 8 V1 M4.8 2.8 L6.6 0.8 L8.4 2.8" fill="none" stroke="#1d2d3e" stroke-width="1.5"/></svg>
<svg width="18" height="14" viewBox="0 0 18 14" style="position:absolute;left:89px;top:510px"><path d="M8.5 1.2 A6 6 0 0 1 8.5 12.8" fill="none" stroke="#dfe2e4" stroke-width="2.2"/><circle cx="6.4" cy="7" r="5.2" fill="#d9dcde"/></svg>
<svg width="13" height="13" viewBox="0 0 13 13" style="position:absolute;left:120px;top:510.5px"><g transform="rotate(-45 6.5 6.5)"><rect x="4" y="0.5" width="5" height="12" rx="2.5" fill="none" stroke="#d9dcde" stroke-width="1.3"/><path d="M6.5 3.5 V9" stroke="#d9dcde" stroke-width="1.2"/></g></svg>
<div style="position:absolute;left:365px;top:506px;width:744px;height:20px;background:#f6f6f6;border-bottom:1px solid #d4d4d4"></div>
<div style="position:absolute;left:365px;top:506px;width:22px;height:20px;background:#c1c6c7;border-right:1px solid #a9aeb0"></div>
<svg width="6" height="10" viewBox="0 0 6 10" style="position:absolute;left:374px;top:511px"><path d="M5.5 0.5 V9.5 L0.5 5 Z" fill="#fff"/></svg>
<div style="position:absolute;left:388px;top:506px;width:366px;height:20px;background:#c1c6c7"></div>
<svg width="10" height="3" viewBox="0 0 10 3" style="position:absolute;left:565px;top:516px"><circle cx="1.2" cy="1.5" r="0.9" fill="#8a9091"/><circle cx="4.6" cy="1.5" r="0.9" fill="#8a9091"/><circle cx="8" cy="1.5" r="0.9" fill="#8a9091"/></svg>
<div style="position:absolute;left:1087px;top:506px;width:21px;height:20px;background:#c1c6c7"></div>
<svg width="6" height="10" viewBox="0 0 6 10" style="position:absolute;left:1095px;top:511px"><path d="M0.5 0.5 V9.5 L5.5 5 Z" fill="#fff"/></svg>
<div style="position:absolute;left:52px;top:526px;width:1056px;height:34px;background:#f6f6f6;border-bottom:1px solid #cfd3d5"></div>
<svg width="13" height="13" viewBox="0 0 13 13" style="position:absolute;left:60.5px;top:535.5px"><g transform="rotate(-45 6.5 6.5)"><rect x="4" y="0.8" width="5" height="6.4" rx="2.5" fill="none" stroke="#1d2d3e" stroke-width="1.5"/><rect x="4" y="5.8" width="5" height="6.4" rx="2.5" fill="none" stroke="#1d2d3e" stroke-width="1.5"/></g></svg>
<div style="position:absolute;left:91px;top:535px;font-size:13px;color:#2c3e50;white-space:nowrap"><b style="font-weight:bold;font-size:12px">Запросы</b> <b style="font-size:10.5px">(935)</b></div>
<svg width="10" height="10" viewBox="0 0 10 10" style="position:absolute;left:178px;top:536px"><circle cx="4" cy="4" r="3" fill="none" stroke="#8d9396" stroke-width="1.2"/><path d="M6.2 6.2 L9 9" stroke="#8d9396" stroke-width="1.5"/></svg>
<div style="position:absolute;left:266px;top:529px;width:48px;text-align:center;font-size:10px;color:#2c3e50;white-space:nowrap;letter-spacing:-0.2px">"!Частота"</div>
<div style="position:absolute;left:267px;top:541px;width:46px;height:1.3px;background:repeating-linear-gradient(90deg,#4a5866 0 2.4px,transparent 2.4px 4.2px)"></div>
<svg width="12" height="12" viewBox="0 0 12 12" style="position:absolute;left:284px;top:545.5px"><circle cx="6" cy="6" r="5.2" fill="none" stroke="#dadddf" stroke-width="1.1"/><path d="M2 3.5 L3.8 3 L5 4 L4.6 5.8 L3.4 6.6 L3.8 8.8 L2.6 8 L1.6 5.8 Z M6.8 1.4 L9 2.2 L10.4 4.6 L9.6 7.4 L8.2 10 L7.6 7.4 L6.6 6 L7.8 4.2 L6.8 3 Z" fill="#dfe2e3"/></svg>
<div style="position:absolute;left:318px;top:537.5px;width:47px;text-align:center;font-size:10px;color:#2c3e50">Визиты</div>
<div style="position:absolute;left:365px;top:526px;width:743px;height:174px;overflow:hidden">
<div style="position:absolute;left:0.50px;top:0;width:61.45px;height:34px;border-left:1px solid #d4d4d4;overflow:hidden"><div style="position:absolute;left:3px;top:3px;font-size:11px;color:#1d2d3e;white-space:nowrap">13.08.2018</div>
<div style="position:absolute;left:19px;top:20px;width:11px;height:11px;border-radius:50%;background:#9aa0a2;color:#fff;font-size:7px;line-height:11px;text-align:center;font-weight:bold">%</div><div style="position:absolute;left:31px;top:15px;font-size:9.5px;color:#9aa0a2">88</div>
</div>
<div style="position:absolute;left:61.95px;top:0;width:61.45px;height:34px;border-left:1px solid #d4d4d4;overflow:hidden"><div style="position:absolute;left:3px;top:3px;font-size:11px;color:#1d2d3e;white-space:nowrap">27.07.2018</div>
<div style="position:absolute;left:19px;top:20px;width:11px;height:11px;border-radius:50%;background:#9aa0a2;color:#fff;font-size:7px;line-height:11px;text-align:center;font-weight:bold">%</div><div style="position:absolute;left:31px;top:15px;font-size:9.5px;color:#9aa0a2">79</div>
</div>
<div style="position:absolute;left:123.40px;top:0;width:61.45px;height:34px;border-left:1px solid #d4d4d4;overflow:hidden"><div style="position:absolute;left:3px;top:3px;font-size:11px;color:#1d2d3e;white-space:nowrap">13.07.2018</div>
<div style="position:absolute;left:19px;top:20px;width:11px;height:11px;border-radius:50%;background:#9aa0a2;color:#fff;font-size:7px;line-height:11px;text-align:center;font-weight:bold">%</div><div style="position:absolute;left:31px;top:15px;font-size:9.5px;color:#9aa0a2">86</div>
</div>
<div style="position:absolute;left:184.85px;top:0;width:61.45px;height:34px;border-left:1px solid #d4d4d4;overflow:hidden"><div style="position:absolute;left:3px;top:3px;font-size:11px;color:#1d2d3e;white-space:nowrap">27.06.2018</div>
<div style="position:absolute;left:19px;top:20px;width:11px;height:11px;border-radius:50%;background:#9aa0a2;color:#fff;font-size:7px;line-height:11px;text-align:center;font-weight:bold">%</div><div style="position:absolute;left:31px;top:15px;font-size:9.5px;color:#9aa0a2">87</div>
</div>
<div style="position:absolute;left:246.30px;top:0;width:61.45px;height:34px;border-left:1px solid #d4d4d4;overflow:hidden"><div style="position:absolute;left:3px;top:3px;font-size:11px;color:#1d2d3e;white-space:nowrap">13.06.2018</div>
<div style="position:absolute;left:19px;top:20px;width:11px;height:11px;border-radius:50%;background:#9aa0a2;color:#fff;font-size:7px;line-height:11px;text-align:center;font-weight:bold">%</div><div style="position:absolute;left:31px;top:15px;font-size:9.5px;color:#9aa0a2">76</div>
</div>
<div style="position:absolute;left:307.75px;top:0;width:61.45px;height:34px;border-left:1px solid #d4d4d4;overflow:hidden"><div style="position:absolute;left:3px;top:3px;font-size:11px;color:#1d2d3e;white-space:nowrap">27.05.2018</div>
<div style="position:absolute;left:19px;top:20px;width:11px;height:11px;border-radius:50%;background:#9aa0a2;color:#fff;font-size:7px;line-height:11px;text-align:center;font-weight:bold">%</div><div style="position:absolute;left:31px;top:15px;font-size:9.5px;color:#9aa0a2">71</div>
</div>
<div style="position:absolute;left:369.20px;top:0;width:61.45px;height:34px;border-left:1px solid #d4d4d4;overflow:hidden"><div style="position:absolute;left:3px;top:3px;font-size:11px;color:#1d2d3e;white-space:nowrap">13.05.2018</div>
<div style="position:absolute;left:19px;top:20px;width:11px;height:11px;border-radius:50%;background:#9aa0a2;color:#fff;font-size:7px;line-height:11px;text-align:center;font-weight:bold">%</div><div style="position:absolute;left:31px;top:15px;font-size:9.5px;color:#9aa0a2">72</div>
</div>
<div style="position:absolute;left:430.65px;top:0;width:61.45px;height:34px;border-left:1px solid #d4d4d4;overflow:hidden"><div style="position:absolute;left:3px;top:3px;font-size:11px;color:#1d2d3e;white-space:nowrap">27.04.2018</div>
<div style="position:absolute;left:19px;top:20px;width:11px;height:11px;border-radius:50%;background:#9aa0a2;color:#fff;font-size:7px;line-height:11px;text-align:center;font-weight:bold">%</div><div style="position:absolute;left:31px;top:15px;font-size:9.5px;color:#9aa0a2">68</div>
</div>
<div style="position:absolute;left:492.10px;top:0;width:61.45px;height:34px;border-left:1px solid #d4d4d4;overflow:hidden"><div style="position:absolute;left:3px;top:3px;font-size:11px;color:#1d2d3e;white-space:nowrap">13.04.2018</div>
<div style="position:absolute;left:19px;top:20px;width:11px;height:11px;border-radius:50%;background:#9aa0a2;color:#fff;font-size:7px;line-height:11px;text-align:center;font-weight:bold">%</div><div style="position:absolute;left:31px;top:15px;font-size:9.5px;color:#9aa0a2">65</div>
</div>
<div style="position:absolute;left:553.55px;top:0;width:61.45px;height:34px;border-left:1px solid #d4d4d4;overflow:hidden"><div style="position:absolute;left:3px;top:3px;font-size:11px;color:#1d2d3e;white-space:nowrap">27.03.2018</div>
<div style="position:absolute;left:19px;top:20px;width:11px;height:11px;border-radius:50%;background:#9aa0a2;color:#fff;font-size:7px;line-height:11px;text-align:center;font-weight:bold">%</div><div style="position:absolute;left:31px;top:15px;font-size:9.5px;color:#9aa0a2">66</div>
</div>
<div style="position:absolute;left:615.00px;top:0;width:61.45px;height:34px;border-left:1px solid #d4d4d4;overflow:hidden"><div style="position:absolute;left:3px;top:3px;font-size:11px;color:#1d2d3e;white-space:nowrap">13.03.2018</div>
<div style="position:absolute;left:19px;top:20px;width:11px;height:11px;border-radius:50%;background:#9aa0a2;color:#fff;font-size:7px;line-height:11px;text-align:center;font-weight:bold">%</div><div style="position:absolute;left:31px;top:15px;font-size:9.5px;color:#9aa0a2">69</div>
</div>
<div style="position:absolute;left:676.45px;top:0;width:61.45px;height:34px;border-left:1px solid #d4d4d4;overflow:hidden"><div style="position:absolute;left:3px;top:3px;font-size:11px;color:#1d2d3e;white-space:nowrap">27.02.2018</div>
<div style="position:absolute;left:19px;top:20px;width:11px;height:11px;border-radius:50%;background:#9aa0a2;color:#fff;font-size:7px;line-height:11px;text-align:center;font-weight:bold">%</div><div style="position:absolute;left:31px;top:15px;font-size:9.5px;color:#9aa0a2">77</div>
</div>
<div style="position:absolute;left:737.90px;top:0;width:61.45px;height:34px;border-left:1px solid #d4d4d4;overflow:hidden"><div style="position:absolute;left:3px;top:3px;font-size:11px;color:#1d2d3e;white-space:nowrap">13.02.2018</div>
<div style="position:absolute;left:19px;top:20px;width:11px;height:11px;border-radius:50%;background:#9aa0a2;color:#fff;font-size:7px;line-height:11px;text-align:center;font-weight:bold">%</div><div style="position:absolute;left:31px;top:15px;font-size:9.5px;color:#9aa0a2">70</div>
</div>
<div style="position:absolute;left:0.50px;top:34px;width:61.45px;height:32px;background:#bddcf3;border-left:1px solid #cdd1d3;border-bottom:1px solid #cdd1d3"><div style="position:absolute;left:8px;top:4px;font-size:14.5px;color:#1d2d3e;text-decoration:underline">3</div></div>
<div style="position:absolute;left:61.95px;top:34px;width:61.45px;height:32px;background:#bddcf3;border-left:1px solid #cdd1d3;border-bottom:1px solid #cdd1d3"><div style="position:absolute;left:8px;top:4px;font-size:14.5px;color:#1d2d3e;text-decoration:underline">3</div><span style="position:absolute;left:17px;top:4px;font-size:8px;color:#1eb98e;text-decoration:none">-1</span></div>
<div style="position:absolute;left:123.40px;top:34px;width:61.45px;height:32px;background:#93e0b2;border-left:1px solid #cdd1d3;border-bottom:1px solid #cdd1d3"><div style="position:absolute;left:8px;top:4px;font-size:14.5px;color:#1d2d3e;text-decoration:underline">4</div><span style="position:absolute;left:17px;top:4px;font-size:8px;color:#e74c3c;text-decoration:none">-1</span></div>
<div style="position:absolute;left:184.85px;top:34px;width:61.45px;height:32px;background:#bddcf3;border-left:1px solid #cdd1d3;border-bottom:1px solid #cdd1d3"><div style="position:absolute;left:8px;top:4px;font-size:14.5px;color:#1d2d3e;text-decoration:underline">3</div><span style="position:absolute;left:17px;top:4px;font-size:8px;color:#1eb98e;text-decoration:none">-1</span></div>
<div style="position:absolute;left:246.30px;top:34px;width:61.45px;height:32px;background:#93e0b2;border-left:1px solid #cdd1d3;border-bottom:1px solid #cdd1d3"><div style="position:absolute;left:8px;top:4px;font-size:14.5px;color:#1d2d3e;text-decoration:underline">4</div><span style="position:absolute;left:17px;top:4px;font-size:8px;color:#1eb98e;text-decoration:none">-1</span></div>
<div style="position:absolute;left:307.75px;top:34px;width:61.45px;height:32px;background:#9ce3ba;border-left:1px solid #cdd1d3;border-bottom:1px solid #cdd1d3"><div style="position:absolute;left:8px;top:4px;font-size:14.5px;color:#1d2d3e;text-decoration:underline">5</div><span style="position:absolute;left:17px;top:4px;font-size:8px;color:#1eb98e;text-decoration:none">-1</span></div>
<div style="position:absolute;left:369.20px;top:34px;width:61.45px;height:32px;background:#a1e5be;border-left:1px solid #cdd1d3;border-bottom:1px solid #cdd1d3"><div style="position:absolute;left:8px;top:4px;font-size:14.5px;color:#1d2d3e;text-decoration:underline">6</div><span style="position:absolute;left:17px;top:4px;font-size:8px;color:#1eb98e;text-decoration:none">-1</span></div>
<div style="position:absolute;left:430.65px;top:34px;width:61.45px;height:32px;background:#a8e7c3;border-left:1px solid #cdd1d3;border-bottom:1px solid #cdd1d3"><div style="position:absolute;left:8px;top:4px;font-size:14.5px;color:#1d2d3e;text-decoration:underline">7</div><span style="position:absolute;left:17px;top:4px;font-size:8px;color:#1eb98e;text-decoration:none">-1</span></div>
<div style="position:absolute;left:492.10px;top:34px;width:61.45px;height:32px;background:#b8ecd0;border-left:1px solid #cdd1d3;border-bottom:1px solid #cdd1d3"><div style="position:absolute;left:8px;top:4px;font-size:14.5px;color:#1d2d3e;text-decoration:underline">8</div><span style="position:absolute;left:17px;top:4px;font-size:8px;color:#1eb98e;text-decoration:none">-2</span></div>
<div style="position:absolute;left:553.55px;top:34px;width:61.45px;height:32px;background:#d0f2de;border-left:1px solid #cdd1d3;border-bottom:1px solid #cdd1d3"><div style="position:absolute;left:8px;top:4px;font-size:14.5px;color:#1d2d3e;text-decoration:underline">10</div><span style="position:absolute;left:25px;top:4px;font-size:8px;color:#1eb98e;text-decoration:none">-2</span></div>
<div style="position:absolute;left:615.00px;top:34px;width:61.45px;height:32px;background:#eef8f3;border-left:1px solid #cdd1d3;border-bottom:1px solid #cdd1d3"><div style="position:absolute;left:8px;top:4px;font-size:14.5px;color:#1d2d3e;text-decoration:underline">12</div><span style="position:absolute;left:25px;top:4px;font-size:8px;color:#1eb98e;text-decoration:none">-1</span></div>
<div style="position:absolute;left:676.45px;top:34px;width:61.45px;height:32px;background:#ffffff;border-left:1px solid #cdd1d3;border-bottom:1px solid #cdd1d3"><div style="position:absolute;left:8px;top:4px;font-size:14.5px;color:#1d2d3e;text-decoration:underline">13</div></div>
<div style="position:absolute;left:737.90px;top:34px;width:61.45px;height:32px;background:#f6e7dc;border-left:1px solid #cdd1d3;border-bottom:1px solid #cdd1d3"></div>
<div style="position:absolute;left:0.50px;top:66px;width:61.45px;height:32px;background:#a8d3f0;border-left:1px solid #cdd1d3;border-bottom:1px solid #cdd1d3"><div style="position:absolute;left:8px;top:4px;font-size:14.5px;color:#1d2d3e;text-decoration:underline">1</div></div>
<div style="position:absolute;left:61.95px;top:66px;width:61.45px;height:32px;background:#a8d3f0;border-left:1px solid #cdd1d3;border-bottom:1px solid #cdd1d3"><div style="position:absolute;left:8px;top:4px;font-size:14.5px;color:#1d2d3e;text-decoration:underline">1</div></div>
<div style="position:absolute;left:123.40px;top:66px;width:61.45px;height:32px;background:#a8d3f0;border-left:1px solid #cdd1d3;border-bottom:1px solid #cdd1d3"><div style="position:absolute;left:8px;top:4px;font-size:14.5px;color:#1d2d3e;text-decoration:underline">1</div></div>
<div style="position:absolute;left:184.85px;top:66px;width:61.45px;height:32px;background:#a8d3f0;border-left:1px solid #cdd1d3;border-bottom:1px solid #cdd1d3"><div style="position:absolute;left:8px;top:4px;font-size:14.5px;color:#1d2d3e;text-decoration:underline">1</div></div>
<div style="position:absolute;left:246.30px;top:66px;width:61.45px;height:32px;background:#a8d3f0;border-left:1px solid #cdd1d3;border-bottom:1px solid #cdd1d3"><div style="position:absolute;left:8px;top:4px;font-size:14.5px;color:#1d2d3e;text-decoration:underline">1</div></div>
<div style="position:absolute;left:307.75px;top:66px;width:61.45px;height:32px;background:#a8d3f0;border-left:1px solid #cdd1d3;border-bottom:1px solid #cdd1d3"><div style="position:absolute;left:8px;top:4px;font-size:14.5px;color:#1d2d3e;text-decoration:underline">1</div></div>
<div style="position:absolute;left:369.20px;top:66px;width:61.45px;height:32px;background:#a8d3f0;border-left:1px solid #cdd1d3;border-bottom:1px solid #cdd1d3"><div style="position:absolute;left:8px;top:4px;font-size:14.5px;color:#1d2d3e;text-decoration:underline">1</div></div>
<div style="position:absolute;left:430.65px;top:66px;width:61.45px;height:32px;background:#a8d3f0;border-left:1px solid #cdd1d3;border-bottom:1px solid #cdd1d3"><div style="position:absolute;left:8px;top:4px;font-size:14.5px;color:#1d2d3e;text-decoration:underline">1</div></div>
<div style="position:absolute;left:492.10px;top:66px;width:61.45px;height:32px;background:#a8d3f0;border-left:1px solid #cdd1d3;border-bottom:1px solid #cdd1d3"><div style="position:absolute;left:8px;top:4px;font-size:14.5px;color:#1d2d3e;text-decoration:underline">1</div></div>
<div style="position:absolute;left:553.55px;top:66px;width:61.45px;height:32px;background:#a8d3f0;border-left:1px solid #cdd1d3;border-bottom:1px solid #cdd1d3"><div style="position:absolute;left:8px;top:4px;font-size:14.5px;color:#1d2d3e;text-decoration:underline">1</div></div>
<div style="position:absolute;left:615.00px;top:66px;width:61.45px;height:32px;background:#a8d3f0;border-left:1px solid #cdd1d3;border-bottom:1px solid #cdd1d3"><div style="position:absolute;left:8px;top:4px;font-size:14.5px;color:#1d2d3e;text-decoration:underline">1</div><span style="position:absolute;left:17px;top:4px;font-size:8px;color:#1eb98e;text-decoration:none">-1</span></div>
<div style="position:absolute;left:676.45px;top:66px;width:61.45px;height:32px;background:#bddcf3;border-left:1px solid #cdd1d3;border-bottom:1px solid #cdd1d3"><div style="position:absolute;left:8px;top:4px;font-size:14.5px;color:#1d2d3e;text-decoration:underline">2</div><span style="position:absolute;left:17px;top:4px;font-size:8px;color:#e74c3c;text-decoration:none">-1</span></div>
<div style="position:absolute;left:737.90px;top:66px;width:61.45px;height:32px;background:#a8d3f0;border-left:1px solid #cdd1d3;border-bottom:1px solid #cdd1d3"></div>
<div style="position:absolute;left:0.50px;top:98px;width:61.45px;height:32px;background:#a8d3f0;border-left:1px solid #cdd1d3;border-bottom:1px solid #cdd1d3"><div style="position:absolute;left:8px;top:4px;font-size:14.5px;color:#1d2d3e;text-decoration:underline">1</div></div>
<div style="position:absolute;left:61.95px;top:98px;width:61.45px;height:32px;background:#a8d3f0;border-left:1px solid #cdd1d3;border-bottom:1px solid #cdd1d3"><div style="position:absolute;left:8px;top:4px;font-size:14.5px;color:#1d2d3e;text-decoration:underline">1</div></div>
<div style="position:absolute;left:123.40px;top:98px;width:61.45px;height:32px;background:#a8d3f0;border-left:1px solid #cdd1d3;border-bottom:1px solid #cdd1d3"><div style="position:absolute;left:8px;top:4px;font-size:14.5px;color:#1d2d3e;text-decoration:underline">1</div></div>
<div style="position:absolute;left:184.85px;top:98px;width:61.45px;height:32px;background:#a8d3f0;border-left:1px solid #cdd1d3;border-bottom:1px solid #cdd1d3"><div style="position:absolute;left:8px;top:4px;font-size:14.5px;color:#1d2d3e;text-decoration:underline">1</div></div>
<div style="position:absolute;left:246.30px;top:98px;width:61.45px;height:32px;background:#a8d3f0;border-left:1px solid #cdd1d3;border-bottom:1px solid #cdd1d3"><div style="position:absolute;left:8px;top:4px;font-size:14.5px;color:#1d2d3e;text-decoration:underline">1</div><span style="position:absolute;left:17px;top:4px;font-size:8px;color:#1eb98e;text-decoration:none">-1</span></div>
<div style="position:absolute;left:307.75px;top:98px;width:61.45px;height:32px;background:#bddcf3;border-left:1px solid #cdd1d3;border-bottom:1px solid #cdd1d3"><div style="position:absolute;left:8px;top:4px;font-size:14.5px;color:#1d2d3e;text-decoration:underline">2</div></div>
<div style="position:absolute;left:369.20px;top:98px;width:61.45px;height:32px;background:#bddcf3;border-left:1px solid #cdd1d3;border-bottom:1px solid #cdd1d3"><div style="position:absolute;left:8px;top:4px;font-size:14.5px;color:#1d2d3e;text-decoration:underline">2</div><span style="position:absolute;left:17px;top:4px;font-size:8px;color:#1eb98e;text-decoration:none">-1</span></div>
<div style="position:absolute;left:430.65px;top:98px;width:61.45px;height:32px;background:#bddcf3;border-left:1px solid #cdd1d3;border-bottom:1px solid #cdd1d3"><div style="position:absolute;left:8px;top:4px;font-size:14.5px;color:#1d2d3e;text-decoration:underline">3</div><span style="position:absolute;left:17px;top:4px;font-size:8px;color:#1eb98e;text-decoration:none">-1</span></div>
<div style="position:absolute;left:492.10px;top:98px;width:61.45px;height:32px;background:#93e0b2;border-left:1px solid #cdd1d3;border-bottom:1px solid #cdd1d3"><div style="position:absolute;left:8px;top:4px;font-size:14.5px;color:#1d2d3e;text-decoration:underline">4</div><span style="position:absolute;left:17px;top:4px;font-size:8px;color:#1eb98e;text-decoration:none">-1</span></div>
<div style="position:absolute;left:553.55px;top:98px;width:61.45px;height:32px;background:#93e0b2;border-left:1px solid #cdd1d3;border-bottom:1px solid #cdd1d3"><div style="position:absolute;left:8px;top:4px;font-size:14.5px;color:#1d2d3e;text-decoration:underline">5</div><span style="position:absolute;left:17px;top:4px;font-size:8px;color:#e74c3c;text-decoration:none">-1</span></div>
<div style="position:absolute;left:615.00px;top:98px;width:61.45px;height:32px;background:#93e0b2;border-left:1px solid #cdd1d3;border-bottom:1px solid #cdd1d3"><div style="position:absolute;left:8px;top:4px;font-size:14.5px;color:#1d2d3e;text-decoration:underline">4</div><span style="position:absolute;left:17px;top:4px;font-size:8px;color:#1eb98e;text-decoration:none">-1</span></div>
<div style="position:absolute;left:676.45px;top:98px;width:61.45px;height:32px;background:#93e0b2;border-left:1px solid #cdd1d3;border-bottom:1px solid #cdd1d3"><div style="position:absolute;left:8px;top:4px;font-size:14.5px;color:#1d2d3e;text-decoration:underline">5</div></div>
<div style="position:absolute;left:737.90px;top:98px;width:61.45px;height:32px;background:#93e0b2;border-left:1px solid #cdd1d3;border-bottom:1px solid #cdd1d3"></div>
<div style="position:absolute;left:0.50px;top:130px;width:61.45px;height:32px;background:#f6f6f6;border-left:1px solid #cdd1d3;border-bottom:1px solid #cdd1d3"></div>
<div style="position:absolute;left:61.95px;top:130px;width:61.45px;height:32px;background:#f6f6f6;border-left:1px solid #cdd1d3;border-bottom:1px solid #cdd1d3"></div>
<div style="position:absolute;left:123.40px;top:130px;width:61.45px;height:32px;background:#f6f6f6;border-left:1px solid #cdd1d3;border-bottom:1px solid #cdd1d3"></div>
<div style="position:absolute;left:184.85px;top:130px;width:61.45px;height:32px;background:#f6f6f6;border-left:1px solid #cdd1d3;border-bottom:1px solid #cdd1d3"></div>
<div style="position:absolute;left:246.30px;top:130px;width:61.45px;height:32px;background:#f6f6f6;border-left:1px solid #cdd1d3;border-bottom:1px solid #cdd1d3"></div>
<div style="position:absolute;left:307.75px;top:130px;width:61.45px;height:32px;background:#f6f6f6;border-left:1px solid #cdd1d3;border-bottom:1px solid #cdd1d3"></div>
<div style="position:absolute;left:369.20px;top:130px;width:61.45px;height:32px;background:#f6f6f6;border-left:1px solid #cdd1d3;border-bottom:1px solid #cdd1d3"></div>
<div style="position:absolute;left:430.65px;top:130px;width:61.45px;height:32px;background:#f6f6f6;border-left:1px solid #cdd1d3;border-bottom:1px solid #cdd1d3"></div>
<div style="position:absolute;left:492.10px;top:130px;width:61.45px;height:32px;background:#f6f6f6;border-left:1px solid #cdd1d3;border-bottom:1px solid #cdd1d3"></div>
<div style="position:absolute;left:553.55px;top:130px;width:61.45px;height:32px;background:#f6f6f6;border-left:1px solid #cdd1d3;border-bottom:1px solid #cdd1d3"></div>
<div style="position:absolute;left:615.00px;top:130px;width:61.45px;height:32px;background:#f6f6f6;border-left:1px solid #cdd1d3;border-bottom:1px solid #cdd1d3"></div>
<div style="position:absolute;left:676.45px;top:130px;width:61.45px;height:32px;background:#f6f6f6;border-left:1px solid #cdd1d3;border-bottom:1px solid #cdd1d3"></div>
<div style="position:absolute;left:737.90px;top:130px;width:61.45px;height:32px;background:#f6f6f6;border-left:1px solid #cdd1d3;border-bottom:1px solid #cdd1d3"></div>
<div style="position:absolute;left:0.50px;top:162px;width:61.45px;height:32px;background:#a8d3f0;border-left:1px solid #cdd1d3;border-bottom:1px solid #cdd1d3"><div style="position:absolute;left:8px;top:4px;font-size:14.5px;color:#1d2d3e;text-decoration:underline">1</div></div>
<div style="position:absolute;left:61.95px;top:162px;width:61.45px;height:32px;background:#a8d3f0;border-left:1px solid #cdd1d3;border-bottom:1px solid #cdd1d3"><div style="position:absolute;left:8px;top:4px;font-size:14.5px;color:#1d2d3e;text-decoration:underline">1</div></div>
<div style="position:absolute;left:123.40px;top:162px;width:61.45px;height:32px;background:#a8d3f0;border-left:1px solid #cdd1d3;border-bottom:1px solid #cdd1d3"><div style="position:absolute;left:8px;top:4px;font-size:14.5px;color:#1d2d3e;text-decoration:underline">1</div></div>
<div style="position:absolute;left:184.85px;top:162px;width:61.45px;height:32px;background:#a8d3f0;border-left:1px solid #cdd1d3;border-bottom:1px solid #cdd1d3"><div style="position:absolute;left:8px;top:4px;font-size:14.5px;color:#1d2d3e;text-decoration:underline">1</div></div>
<div style="position:absolute;left:246.30px;top:162px;width:61.45px;height:32px;background:#a8d3f0;border-left:1px solid #cdd1d3;border-bottom:1px solid #cdd1d3"><div style="position:absolute;left:8px;top:4px;font-size:14.5px;color:#1d2d3e;text-decoration:underline">1</div></div>
<div style="position:absolute;left:307.75px;top:162px;width:61.45px;height:32px;background:#a8d3f0;border-left:1px solid #cdd1d3;border-bottom:1px solid #cdd1d3"><div style="position:absolute;left:8px;top:4px;font-size:14.5px;color:#1d2d3e;text-decoration:underline">1</div></div>
<div style="position:absolute;left:369.20px;top:162px;width:61.45px;height:32px;background:#a8d3f0;border-left:1px solid #cdd1d3;border-bottom:1px solid #cdd1d3"><div style="position:absolute;left:8px;top:4px;font-size:14.5px;color:#1d2d3e;text-decoration:underline">1</div></div>
<div style="position:absolute;left:430.65px;top:162px;width:61.45px;height:32px;background:#a8d3f0;border-left:1px solid #cdd1d3;border-bottom:1px solid #cdd1d3"><div style="position:absolute;left:8px;top:4px;font-size:14.5px;color:#1d2d3e;text-decoration:underline">1</div></div>
<div style="position:absolute;left:492.10px;top:162px;width:61.45px;height:32px;background:#a8d3f0;border-left:1px solid #cdd1d3;border-bottom:1px solid #cdd1d3"><div style="position:absolute;left:8px;top:4px;font-size:14.5px;color:#1d2d3e;text-decoration:underline">1</div></div>
<div style="position:absolute;left:553.55px;top:162px;width:61.45px;height:32px;background:#a8d3f0;border-left:1px solid #cdd1d3;border-bottom:1px solid #cdd1d3"><div style="position:absolute;left:8px;top:4px;font-size:14.5px;color:#1d2d3e;text-decoration:underline">1</div></div>
<div style="position:absolute;left:615.00px;top:162px;width:61.45px;height:32px;background:#a8d3f0;border-left:1px solid #cdd1d3;border-bottom:1px solid #cdd1d3"><div style="position:absolute;left:8px;top:4px;font-size:14.5px;color:#1d2d3e;text-decoration:underline">1</div><span style="position:absolute;left:17px;top:4px;font-size:8px;color:#1eb98e;text-decoration:none">-1</span></div>
<div style="position:absolute;left:676.45px;top:162px;width:61.45px;height:32px;background:#bddcf3;border-left:1px solid #cdd1d3;border-bottom:1px solid #cdd1d3"><div style="position:absolute;left:8px;top:4px;font-size:14.5px;color:#1d2d3e;text-decoration:underline">2</div><span style="position:absolute;left:17px;top:4px;font-size:8px;color:#e74c3c;text-decoration:none">-1</span></div>
<div style="position:absolute;left:737.90px;top:162px;width:61.45px;height:32px;background:#a8d3f0;border-left:1px solid #cdd1d3;border-bottom:1px solid #cdd1d3"></div>
</div>
<div style="position:absolute;left:52px;top:560px;width:313px;height:32px;background:#f6f6f6;border-bottom:1px solid #d4d4d4"></div>
<svg width="12" height="11" viewBox="0 0 12 11" style="position:absolute;left:61px;top:572px"><path d="M6 0.5 L11.5 10.5 H0.5 Z" fill="#e2452f"/><path d="M6 3.5 V7" stroke="#fff" stroke-width="1.5"/><circle cx="6" cy="8.7" r="0.85" fill="#fff"/></svg>
<div style="position:absolute;left:92px;top:571px;font-size:10px;color:#2c3e50;white-space:nowrap">очистка водоемов</div>
<div style="position:absolute;left:262px;top:570px;width:55px;text-align:center;font-size:11px;color:#1d2d3e">138</div>
<div style="position:absolute;left:317px;top:570px;width:48px;text-align:center;font-size:11px;color:#1d2d3e">0</div>
<div style="position:absolute;left:52px;top:592px;width:313px;height:32px;background:#fff;border-bottom:1px solid #d4d4d4"></div>
<svg width="12" height="11" viewBox="0 0 12 11" style="position:absolute;left:61px;top:604px"><path d="M6 0.5 L11.5 10.5 H0.5 Z" fill="#e2452f"/><path d="M6 3.5 V7" stroke="#fff" stroke-width="1.5"/><circle cx="6" cy="8.7" r="0.85" fill="#fff"/></svg>
<div style="position:absolute;left:92px;top:603px;font-size:10px;color:#2c3e50;white-space:nowrap">рыба для пруда купить</div>
<div style="position:absolute;left:262px;top:602px;width:55px;text-align:center;font-size:11px;color:#1d2d3e">94</div>
<div style="position:absolute;left:317px;top:602px;width:48px;text-align:center;font-size:11px;color:#1d2d3e">0</div>
<div style="position:absolute;left:52px;top:624px;width:313px;height:32px;background:#f6f6f6;border-bottom:1px solid #d4d4d4"></div>
<svg width="12" height="11" viewBox="0 0 12 11" style="position:absolute;left:61px;top:636px"><path d="M6 0.5 L11.5 10.5 H0.5 Z" fill="#e2452f"/><path d="M6 3.5 V7" stroke="#fff" stroke-width="1.5"/><circle cx="6" cy="8.7" r="0.85" fill="#fff"/></svg>
<div style="position:absolute;left:92px;top:635px;font-size:10px;color:#2c3e50;white-space:nowrap">очистка пруда</div>
<div style="position:absolute;left:262px;top:634px;width:55px;text-align:center;font-size:11px;color:#1d2d3e">73</div>
<div style="position:absolute;left:317px;top:634px;width:48px;text-align:center;font-size:11px;color:#1d2d3e">0</div>
<div style="position:absolute;left:52px;top:656px;width:313px;height:32px;background:#fff;border-bottom:1px solid #d4d4d4"></div>
<div style="position:absolute;left:62px;top:672px;width:9px;height:1.5px;background:#b9bdbf"></div>
<div style="position:absolute;left:92px;top:667px;font-size:10px;color:#2c3e50;white-space:nowrap">малек карпа купить цена</div>
<div style="position:absolute;left:262px;top:666px;width:55px;text-align:center;font-size:11px;color:#1d2d3e">72</div>
<div style="position:absolute;left:317px;top:666px;width:48px;text-align:center;font-size:11px;color:#1d2d3e">0</div>
<div style="position:absolute;left:52px;top:688px;width:313px;height:32px;background:#f6f6f6;border-bottom:1px solid #d4d4d4"></div>
<svg width="12" height="11" viewBox="0 0 12 11" style="position:absolute;left:61px;top:700px"><path d="M6 0.5 L11.5 10.5 H0.5 Z" fill="#f08a24"/><path d="M6 3.5 V7" stroke="#fff" stroke-width="1.5"/><circle cx="6" cy="8.7" r="0.85" fill="#fff"/></svg>
<div style="position:absolute;left:92px;top:699px;font-size:10px;color:#2c3e50;white-space:nowrap">рыба</div>
<div style="position:absolute;left:262px;top:698px;width:55px;text-align:center;font-size:11px;color:#1d2d3e">69</div>
<div style="position:absolute;left:317px;top:698px;width:48px;text-align:center;font-size:11px;color:#1d2d3e">1</div>
<div style="position:absolute;left:82px;top:526px;width:1px;height:174px;background:#d4d4d4"></div>
<div style="position:absolute;left:262px;top:526px;width:1px;height:174px;background:#d4d4d4"></div>
<div style="position:absolute;left:317px;top:526px;width:1px;height:174px;background:#d4d4d4"></div>
<div style="position:absolute;left:365px;top:526px;width:1px;height:174px;background:#d4d4d4"></div>
<div style="position:absolute;left:1108px;top:506px;width:2px;height:194px;background:#f3f3f3"></div>
</body></html>
